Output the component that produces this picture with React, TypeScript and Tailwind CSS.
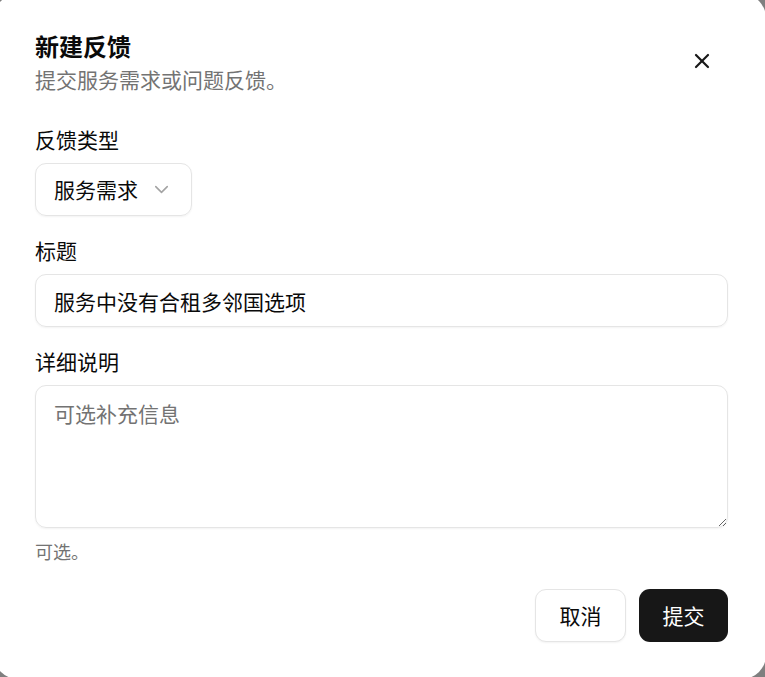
import { ChevronDown, X } from 'lucide-react';

export default function App() {
  return (
    <div className="w-[765px] h-[677px] overflow-hidden bg-[#7f7f7f] font-['Noto_Sans_CJK_SC',sans-serif]">
      <div className="relative -ml-[6px] -mt-[6px] w-[772px] h-[685px] bg-white rounded-[24px] pl-[41px] pr-[38px] pt-[36px] flex flex-col">
        <button className="absolute left-[696px] top-[55px] text-[#171717]">
          <X size={24} strokeWidth={2.2} />
        </button>

        <div className="flex flex-col gap-[2px]">
          <h2 className="text-[24px] leading-[32px] font-bold text-[#0a0a0a]">新建反馈</h2>
          <p className="text-[21px] leading-[30px] text-[#737373]">提交服务需求或问题反馈。</p>
        </div>

        <label className="mt-[31px] text-[21px] leading-[28px] text-[#0a0a0a]">反馈类型</label>
        <div className="mt-[10px] w-[157px] h-[53px] rounded-[11px] border border-[#e5e5e5] shadow-xs flex items-center justify-between pl-[18px] pr-[18px]">
          <span className="text-[21px] text-[#0a0a0a]">服务需求</span>
          <ChevronDown size={23} strokeWidth={1.6} className="text-[#a3a3a3]" />
        </div>

        <label className="mt-[20px] text-[21px] leading-[28px] text-[#0a0a0a]">标题</label>
        <input
          className="mt-[10px] w-full h-[53px] rounded-[11px] border border-[#e5e5e5] shadow-xs px-[18px] text-[21px] text-[#0a0a0a] outline-none"
          defaultValue="服务中没有合租多邻国选项"
        />

        <label className="mt-[20px] text-[21px] leading-[28px] text-[#0a0a0a]">详细说明</label>
        <textarea
          className="mt-[10px] w-full h-[143px] rounded-[11px] border border-[#e5e5e5] shadow-xs px-[18px] pt-[12px] text-[21px] leading-[30px] text-[#0a0a0a] placeholder:text-[#737373] outline-none"
          placeholder="可选补充信息"
        />
        <p className="mt-[11px] text-[18px] leading-[24px] text-[#737373]">可选。</p>

        <div className="mt-[26px] flex justify-end gap-[13px]">
          <button className="w-[91px] h-[53px] rounded-[11px] border border-[#e5e5e5] bg-white shadow-xs text-[21px] text-[#0a0a0a]">取消</button>
          <button className="w-[89px] h-[53px] rounded-[11px] bg-[#171717] text-[21px] text-white">提交</button>
        </div>
      </div>
    </div>
  );
}
